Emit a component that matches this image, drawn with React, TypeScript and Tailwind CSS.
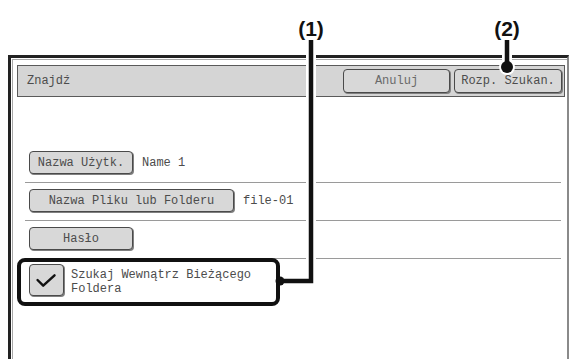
import type { ReactNode } from 'react';

const mono = "font-['Liberation_Mono','DejaVu_Sans_Mono',monospace]";

function PanelButton({ children, className = '' }: { children: ReactNode; className?: string }) {
  return (
    <div
      className={`flex items-center justify-center rounded-[4px] border border-[#4a4a4a] bg-[#d8d8d8] shadow-[1px_1px_0_#808080] ${className}`}
    >
      {children}
    </div>
  );
}

function Row({ label, width, value }: { label: string; width: string; value?: string }) {
  return (
    <div className="mr-[6px] ml-[12px] flex items-center border-b border-[#9a9a9a] pt-[6px] pb-[8px] pl-[4px]">
      <PanelButton className={`h-[23px] ${width} text-[#4c4c4c]`}>{label}</PanelButton>
      {value && <span className="ml-[9px] text-[#4c4c4c]">{value}</span>}
    </div>
  );
}

export default function App() {
  return (
    <div className={`relative flex h-[359px] w-[570px] flex-col overflow-hidden bg-white pt-[55px] text-[12px] ${mono}`}>
      {/* panel frame */}
      <div className="mr-[1px] ml-[8px] flex flex-1 flex-col border-t-[3px] border-r-[2px] border-l-[3px] border-t-[#222] border-r-[#8a8a8a] border-l-[#222]">
        <div className="mt-[1px] ml-[1px] flex flex-1 flex-col border-t border-l border-[#a8a8a8]">
          {/* title bar */}
          <div className="mt-[5px] mr-[2px] ml-[4px] flex h-[32px] items-center border border-[#5a5a5a] bg-[#d5d5d5] pr-[2px] pl-[9px]">
            <span className="flex-1 text-[#4c4c4c]">Znajdź</span>
            <div className="flex gap-[4px]">
              <PanelButton className="h-[24px] w-[107px] text-[#6a6a6a]">Anuluj</PanelButton>
              <PanelButton className="h-[24px] w-[108px] text-[#4c4c4c]">Rozp. Szukan.</PanelButton>
            </div>
          </div>

          <div className="mt-[48px] flex flex-col">
            <Row label="Nazwa Użytk." width="w-[104px]" value="Name 1" />
            <Row label="Nazwa Pliku lub Folderu" width="w-[205px]" value="file-01" />
            <Row label="Hasło" width="w-[104px]" />
            <div className="mt-[5px] ml-[16px] flex items-start gap-[7px]">
              <PanelButton className="h-[32px] w-[35px]">
                <svg width="35" height="32" viewBox="0 0 35 32" fill="none">
                  <path d="M8 16 L14 22 L26 11" stroke="#111" strokeWidth="2.6" strokeLinecap="round" strokeLinejoin="round" />
                </svg>
              </PanelButton>
              <span className="mt-[4px] leading-[14px] text-[#4c4c4c]">
                Szukaj Wewnątrz Bieżącego
                <br />
                Foldera
              </span>
            </div>
          </div>
        </div>
      </div>

      {/* callout annotations */}
      <div className="absolute top-[258px] left-[17px] h-[48px] w-[263px] rounded-[8px] border-[4.5px] border-[#111]" />
      <svg className="absolute top-0 left-0" width="570" height="359" viewBox="0 0 570 359">
        <path d="M311 40 V281 H281" stroke="#fff" strokeWidth="10" fill="none" />
        <path d="M311 40 V281 H281" stroke="#111" strokeWidth="4.5" fill="none" />
        <circle cx="280" cy="281" r="4.5" fill="#111" />
        <path d="M507 40 V64" stroke="#fff" strokeWidth="10" fill="none" />
        <circle cx="507" cy="67" r="8" fill="#fff" />
        <path d="M507 40 V64" stroke="#111" strokeWidth="4.5" fill="none" />
        <circle cx="507" cy="67" r="6" fill="#111" />
      </svg>
      <div className="absolute top-[13px] left-[291px] w-[40px] text-center font-['Liberation_Sans',Arial,sans-serif] text-[21px] font-bold text-[#111]">
        (1)
      </div>
      <div className="absolute top-[13px] left-[487px] w-[40px] text-center font-['Liberation_Sans',Arial,sans-serif] text-[21px] font-bold text-[#111]">
        (2)
      </div>
    </div>
  );
}
